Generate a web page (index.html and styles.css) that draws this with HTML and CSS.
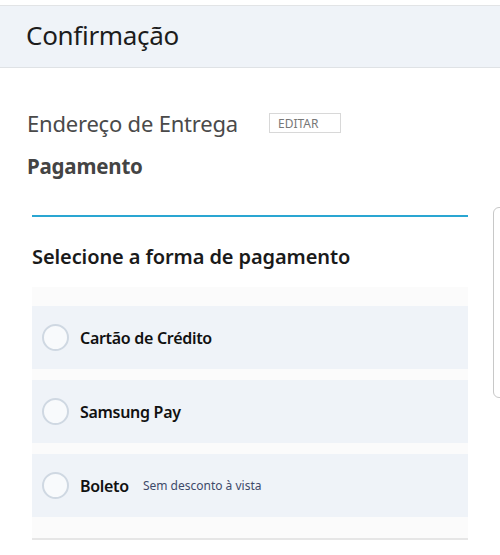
FILE: index.html
```html
<!DOCTYPE html>
<html lang="pt">
<head>
<meta charset="utf-8">
<link rel="stylesheet" href="styles.css">
</head>
<body>
<div class="page">
  <header class="header">
    <h1 class="title">Confirmação</h1>
  </header>
  <section class="content">
    <div class="address">
      <span class="address-label">Endereço de Entrega</span>
      <button class="edit">EDITAR</button>
    </div>
    <h2 class="payment">Pagamento</h2>
    <div class="panel">
      <h3 class="panel-title">Selecione a forma de pagamento</h3>
      <ul class="options">
        <li class="option"><span class="radio"></span><span class="opt-label">Cartão de Crédito</span></li>
        <li class="option"><span class="radio"></span><span class="opt-label">Samsung Pay</span></li>
        <li class="option"><span class="radio"></span><span class="opt-label">Boleto</span><span class="opt-note">Sem desconto à vista</span></li>
      </ul>
    </div>
  </section>
  <div class="side-tab"></div>
</div>
</body>
</html>
```
FILE: styles.css
```css
* { box-sizing: border-box; }
html, body { margin: 0; padding: 0; background: #fff; }
body { font-family: "Noto Sans", "Open Sans", sans-serif; color: #222; }
.page { position: relative; width: 500px; height: 555px; overflow: hidden; padding-top: 5px; }
.header {
  height: 63px;
  background: #eff3f8;
  border-top: 1px solid #e2e4e6;
  border-bottom: 1px solid #dfe2e5;
  display: flex;
  align-items: center;
  padding: 0 0 3px 26px;
}
.title { margin: 0; font-size: 26px; font-weight: 400; color: #1c1c1c; letter-spacing: -0.3px; }
.content { padding: 0 32px 0 27px; }
.address { display: flex; align-items: center; margin-top: 40px; height: 30px; }
.address-label { font-size: 22px; color: #4a4a4a; letter-spacing: -0.2px; width: 242px; }
.edit {
  width: 72px; height: 20px; padding: 0 0 0 8px; text-align: left;
  border: 1px solid #d8d8d8; background: #fff;
  font-family: inherit; font-size: 12px; color: #777;
}
.payment { margin: 14px 0 0; font-size: 20.5px; font-weight: 700; color: #444; line-height: 28px; letter-spacing: -0.2px; }
.panel { margin: 35px 0 0 5px; border-top: 2px solid #2aa6d2; }
.panel-title { margin: 25px 0 0; font-size: 20px; font-weight: 600; color: #1a1a1a; line-height: 30px; letter-spacing: -0.1px; }
.options {
  list-style: none; margin: 15px 0 0; padding: 19px 0 21px;
  background: #fbfbfb; border-bottom: 2px solid #e6e6e6;
  display: flex; flex-direction: column; gap: 11px;
}
.option {
  height: 63px; background: #eff3f8;
  display: flex; align-items: center; padding-left: 10px;
}
.radio {
  width: 27px; height: 27px; border-radius: 50%;
  border: 2px solid #cfd8e2; background: #f8fafc;
  margin-right: 11px;
}
.opt-label { font-size: 16px; font-weight: 600; color: #111; letter-spacing: -0.3px; }
.opt-note { font-size: 12px; color: #3e4a6a; margin-left: 14px; }
.side-tab {
  position: absolute; left: 493px; top: 207px; width: 30px; height: 191px;
  border: 1px solid #c8c8c8; border-radius: 6px; background: #fff;
}
```
